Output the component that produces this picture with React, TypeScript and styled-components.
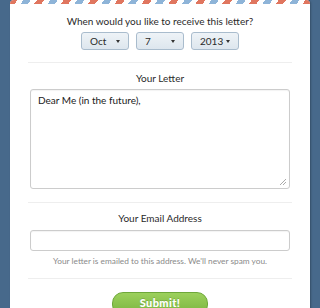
import styled, { createGlobalStyle } from "styled-components";

const GlobalStyle = createGlobalStyle`
  html, body {
    margin: 0;
    padding: 0;
    background: #47698b;
    overflow: hidden;
  }
  body {
    font-family: "Lato", "Open Sans", sans-serif;
    color: #333;
  }
`;

const Page = styled.div`
  width: 320px;
  height: 308px;
  padding: 0 10px;
  box-sizing: border-box;
  overflow: hidden;
`;

const Card = styled.div`
  background: #fff;
  border-radius: 4px 4px 0 0;
  overflow: hidden;
  box-shadow: 1px 0 2px rgba(0, 0, 0, 0.25);
  height: 330px;
`;

const Airmail = styled.div`
  height: 4px;
  background: repeating-linear-gradient(
    -55deg,
    #e0765f 0 6px,
    #ffffff 6px 11px,
    #8eb4d8 11px 17px,
    #ffffff 17px 22px
  );
`;

const Section = styled.div<{ $pad?: string }>`
  margin: 0 18px;
  padding: ${(p) => p.$pad || "0"};
  border-bottom: 1px solid #eeeeee;
  display: flex;
  flex-direction: column;
  align-items: center;
`;

const Label = styled.div`
  font-size: 10px;
  line-height: 14px;
  color: #2a2a2a;
  text-align: center;
`;

const SelectRow = styled.div`
  display: flex;
  gap: 7px;
  margin-top: 4px;
`;

const Select = styled.div`
  width: 48px;
  height: 18px;
  box-sizing: border-box;
  border: 1px solid #a9bccd;
  border-radius: 3px;
  background: linear-gradient(#eef3f7, #dde6ee);
  display: flex;
  align-items: center;
  justify-content: space-between;
  padding: 0 8px 0 8px;
  font-size: 10px;
  color: #2a2a2a;
`;

const Caret = styled.span`
  width: 0;
  height: 0;
  border-left: 2.5px solid transparent;
  border-right: 2.5px solid transparent;
  border-top: 3px solid #333;
`;

const TextArea = styled.div`
  position: relative;
  width: 260px;
  height: 100px;
  box-sizing: border-box;
  margin-top: 4px;
  border: 1px solid #cccccc;
  border-radius: 3px;
  padding: 3px 7px;
  font-size: 10px;
  line-height: 14px;
  color: #1a1a1a;
  box-shadow: inset 0 1px 1px rgba(0, 0, 0, 0.05);
`;

const Grip = styled.svg`
  position: absolute;
  right: 3px;
  bottom: 3px;
`;

const Input = styled.div`
  width: 260px;
  height: 21px;
  box-sizing: border-box;
  margin-top: 5px;
  border: 1px solid #cccccc;
  border-radius: 3px;
  box-shadow: inset 0 1px 1px rgba(0, 0, 0, 0.05);
`;

const Hint = styled.div`
  margin-top: 5px;
  font-size: 8.3px;
  line-height: 11px;
  color: #8a8a8a;
`;

const Footer = styled.div`
  display: flex;
  justify-content: center;
  padding-top: 13px;
`;

const Submit = styled.button`
  width: 96px;
  height: 24px;
  border: 1px solid #6ea83a;
  border-radius: 11px;
  background: linear-gradient(#9cd05c, #78b43e);
  color: #fff;
  font-family: "Lato", sans-serif;
  font-weight: 900;
  font-size: 11px;
  letter-spacing: 0.4px;
  padding: 0 0 3px;
  text-shadow: 0 -1px 0 rgba(0, 0, 0, 0.15);
`;

export default function App() {
  const selects = ["Oct", "7", "2013"];
  return (
    <Page>
      <GlobalStyle />
      <Card>
        <Airmail />
        <Section $pad="10px 0 12px">
          <Label>When would you like to receive this letter?</Label>
          <SelectRow>
            {selects.map((s) => (
              <Select key={s}>
                <span>{s}</span>
                <Caret />
              </Select>
            ))}
          </SelectRow>
        </Section>
        <Section $pad="8px 0 13px">
          <Label>Your Letter</Label>
          <TextArea>
            Dear Me (in the future),
            <Grip width="6" height="6" viewBox="0 0 6 6">
              <path d="M6 0 L0 6 M6 3 L3 6" stroke="#aaa" strokeWidth="1" />
            </Grip>
          </TextArea>
        </Section>
        <Section $pad="8px 0 11px">
          <Label>Your Email Address</Label>
          <Input />
          <Hint>Your letter is emailed to this address. We'll never spam you.</Hint>
        </Section>
        <Footer>
          <Submit>Submit!</Submit>
        </Footer>
      </Card>
    </Page>
  );
}
